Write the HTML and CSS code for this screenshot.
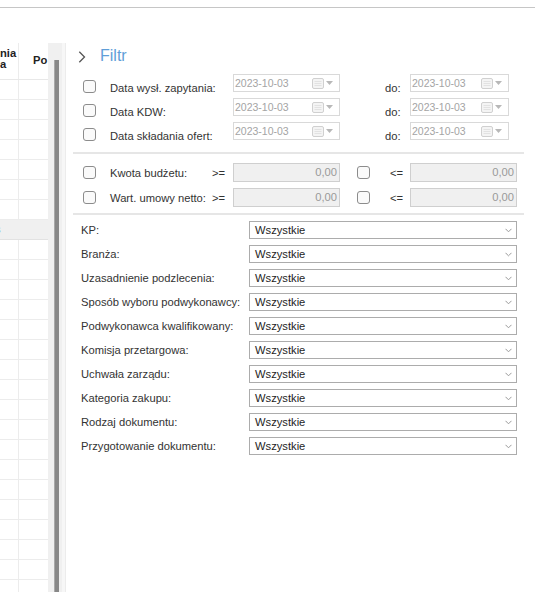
FILE: index.html
```html
<!DOCTYPE html>
<html lang="pl">
<head>
<meta charset="utf-8">
<title>Filtr</title>
<link rel="stylesheet" href="styles.css">
</head>
<body>
<div class="topbar"></div>
<div class="main">
  <div class="leftpane">
    <div class="grid">
      <div class="ghead">
        <div class="hc c1"><span class="h2l">nia<br>a</span></div>
        <div class="hc c2"><span class="h1l">Po</span></div>
      </div>
      <div class="grow"><div class="gc c1"></div><div class="gc c2"></div></div>
      <div class="grow"><div class="gc c1"></div><div class="gc c2"></div></div>
      <div class="grow"><div class="gc c1"></div><div class="gc c2"></div></div>
      <div class="grow"><div class="gc c1"></div><div class="gc c2"></div></div>
      <div class="grow"><div class="gc c1"></div><div class="gc c2"></div></div>
      <div class="grow"><div class="gc c1"></div><div class="gc c2"></div></div>
      <div class="grow"><div class="gc c1"></div><div class="gc c2"></div></div>
      <div class="grow sel"><div class="gc c1"><span class="selchar">s</span></div></div>
      <div class="grow"><div class="gc c1"></div><div class="gc c2"></div></div>
      <div class="grow"><div class="gc c1"></div><div class="gc c2"></div></div>
      <div class="grow"><div class="gc c1"></div><div class="gc c2"></div></div>
      <div class="grow"><div class="gc c1"></div><div class="gc c2"></div></div>
      <div class="grow"><div class="gc c1"></div><div class="gc c2"></div></div>
      <div class="grow"><div class="gc c1"></div><div class="gc c2"></div></div>
      <div class="grow"><div class="gc c1"></div><div class="gc c2"></div></div>
      <div class="grow"><div class="gc c1"></div><div class="gc c2"></div></div>
      <div class="grow"><div class="gc c1"></div><div class="gc c2"></div></div>
      <div class="grow"><div class="gc c1"></div><div class="gc c2"></div></div>
      <div class="grow"><div class="gc c1"></div><div class="gc c2"></div></div>
      <div class="grow"><div class="gc c1"></div><div class="gc c2"></div></div>
      <div class="grow"><div class="gc c1"></div><div class="gc c2"></div></div>
      <div class="grow"><div class="gc c1"></div><div class="gc c2"></div></div>
      <div class="grow"><div class="gc c1"></div><div class="gc c2"></div></div>
      <div class="grow"><div class="gc c1"></div><div class="gc c2"></div></div>
      <div class="grow"><div class="gc c1"></div><div class="gc c2"></div></div>
      <div class="grow"><div class="gc c1"></div><div class="gc c2"></div></div>
    </div>
    <div class="scroll">
      <div class="track"><div class="thumb"></div></div>
      <div class="edge"></div>
    </div>
  </div>

  <section class="filter">
    <div class="fhead">
      <svg class="chev" width="8" height="12" viewBox="0 0 8 12"><path d="M1.3 0.8 L6.5 6 L1.3 11.2" fill="none" stroke="#555" stroke-width="1.3"/></svg>
      <span class="ftitle">Filtr</span>
    </div>

    <div class="dates">
      <div class="drow">
        <span class="cb"></span>
        <span class="dlabel">Data wysł. zapytania:</span>
        <div class="datebox w1"><span class="dval">2023-10-03</span><span class="dicons"><svg width="12" height="11" viewBox="0 0 12 11"><rect x="0.5" y="0.5" width="11" height="10" rx="1.5" fill="#f4f4f4" stroke="#d0d0d0"/><path d="M2.5 3.5h7M2.5 5.5h7M2.5 7.5h7" stroke="#e2e2e2"/></svg><svg width="7" height="4" viewBox="0 0 7 4"><path d="M0 0h7L3.5 4z" fill="#b8b8b8"/></svg></span></div>
        <span class="do">do:</span>
        <div class="datebox w2"><span class="dval">2023-10-03</span><span class="dicons"><svg width="12" height="11" viewBox="0 0 12 11"><rect x="0.5" y="0.5" width="11" height="10" rx="1.5" fill="#f4f4f4" stroke="#d0d0d0"/><path d="M2.5 3.5h7M2.5 5.5h7M2.5 7.5h7" stroke="#e2e2e2"/></svg><svg width="7" height="4" viewBox="0 0 7 4"><path d="M0 0h7L3.5 4z" fill="#b8b8b8"/></svg></span></div>
      </div>
      <div class="drow">
        <span class="cb"></span>
        <span class="dlabel">Data KDW:</span>
        <div class="datebox w1"><span class="dval">2023-10-03</span><span class="dicons"><svg width="12" height="11" viewBox="0 0 12 11"><rect x="0.5" y="0.5" width="11" height="10" rx="1.5" fill="#f4f4f4" stroke="#d0d0d0"/><path d="M2.5 3.5h7M2.5 5.5h7M2.5 7.5h7" stroke="#e2e2e2"/></svg><svg width="7" height="4" viewBox="0 0 7 4"><path d="M0 0h7L3.5 4z" fill="#b8b8b8"/></svg></span></div>
        <span class="do">do:</span>
        <div class="datebox w2"><span class="dval">2023-10-03</span><span class="dicons"><svg width="12" height="11" viewBox="0 0 12 11"><rect x="0.5" y="0.5" width="11" height="10" rx="1.5" fill="#f4f4f4" stroke="#d0d0d0"/><path d="M2.5 3.5h7M2.5 5.5h7M2.5 7.5h7" stroke="#e2e2e2"/></svg><svg width="7" height="4" viewBox="0 0 7 4"><path d="M0 0h7L3.5 4z" fill="#b8b8b8"/></svg></span></div>
      </div>
      <div class="drow">
        <span class="cb"></span>
        <span class="dlabel">Data składania ofert:</span>
        <div class="datebox w1"><span class="dval">2023-10-03</span><span class="dicons"><svg width="12" height="11" viewBox="0 0 12 11"><rect x="0.5" y="0.5" width="11" height="10" rx="1.5" fill="#f4f4f4" stroke="#d0d0d0"/><path d="M2.5 3.5h7M2.5 5.5h7M2.5 7.5h7" stroke="#e2e2e2"/></svg><svg width="7" height="4" viewBox="0 0 7 4"><path d="M0 0h7L3.5 4z" fill="#b8b8b8"/></svg></span></div>
        <span class="do">do:</span>
        <div class="datebox w2"><span class="dval">2023-10-03</span><span class="dicons"><svg width="12" height="11" viewBox="0 0 12 11"><rect x="0.5" y="0.5" width="11" height="10" rx="1.5" fill="#f4f4f4" stroke="#d0d0d0"/><path d="M2.5 3.5h7M2.5 5.5h7M2.5 7.5h7" stroke="#e2e2e2"/></svg><svg width="7" height="4" viewBox="0 0 7 4"><path d="M0 0h7L3.5 4z" fill="#b8b8b8"/></svg></span></div>
      </div>
    </div>

    <div class="sep sep1"></div>

    <div class="budget">
      <div class="brow">
        <span class="cb"></span>
        <span class="blabel">Kwota budżetu:</span>
        <span class="op">&gt;=</span>
        <div class="num">0,00</div>
        <span class="cb cb2"></span>
        <span class="op2">&lt;=</span>
        <div class="num">0,00</div>
      </div>
      <div class="brow">
        <span class="cb"></span>
        <span class="blabel">Wart. umowy netto:</span>
        <span class="op">&gt;=</span>
        <div class="num">0,00</div>
        <span class="cb cb2"></span>
        <span class="op2">&lt;=</span>
        <div class="num">0,00</div>
      </div>
    </div>

    <div class="sep sep2"></div>

    <div class="combos">
      <div class="crow"><span class="clabel">KP:</span><div class="combo"><span>Wszystkie</span><svg width="7" height="5" viewBox="0 0 7 5"><path d="M0.5 0.8 L3.5 3.8 L6.5 0.8" fill="none" stroke="#9a9a9a" stroke-width="1"/></svg></div></div>
      <div class="crow"><span class="clabel">Branża:</span><div class="combo"><span>Wszystkie</span><svg width="7" height="5" viewBox="0 0 7 5"><path d="M0.5 0.8 L3.5 3.8 L6.5 0.8" fill="none" stroke="#9a9a9a" stroke-width="1"/></svg></div></div>
      <div class="crow"><span class="clabel">Uzasadnienie podzlecenia:</span><div class="combo"><span>Wszystkie</span><svg width="7" height="5" viewBox="0 0 7 5"><path d="M0.5 0.8 L3.5 3.8 L6.5 0.8" fill="none" stroke="#9a9a9a" stroke-width="1"/></svg></div></div>
      <div class="crow"><span class="clabel">Sposób wyboru podwykonawcy:</span><div class="combo"><span>Wszystkie</span><svg width="7" height="5" viewBox="0 0 7 5"><path d="M0.5 0.8 L3.5 3.8 L6.5 0.8" fill="none" stroke="#9a9a9a" stroke-width="1"/></svg></div></div>
      <div class="crow"><span class="clabel">Podwykonawca kwalifikowany:</span><div class="combo"><span>Wszystkie</span><svg width="7" height="5" viewBox="0 0 7 5"><path d="M0.5 0.8 L3.5 3.8 L6.5 0.8" fill="none" stroke="#9a9a9a" stroke-width="1"/></svg></div></div>
      <div class="crow"><span class="clabel">Komisja przetargowa:</span><div class="combo"><span>Wszystkie</span><svg width="7" height="5" viewBox="0 0 7 5"><path d="M0.5 0.8 L3.5 3.8 L6.5 0.8" fill="none" stroke="#9a9a9a" stroke-width="1"/></svg></div></div>
      <div class="crow"><span class="clabel">Uchwała zarządu:</span><div class="combo"><span>Wszystkie</span><svg width="7" height="5" viewBox="0 0 7 5"><path d="M0.5 0.8 L3.5 3.8 L6.5 0.8" fill="none" stroke="#9a9a9a" stroke-width="1"/></svg></div></div>
      <div class="crow"><span class="clabel">Kategoria zakupu:</span><div class="combo"><span>Wszystkie</span><svg width="7" height="5" viewBox="0 0 7 5"><path d="M0.5 0.8 L3.5 3.8 L6.5 0.8" fill="none" stroke="#9a9a9a" stroke-width="1"/></svg></div></div>
      <div class="crow"><span class="clabel">Rodzaj dokumentu:</span><div class="combo"><span>Wszystkie</span><svg width="7" height="5" viewBox="0 0 7 5"><path d="M0.5 0.8 L3.5 3.8 L6.5 0.8" fill="none" stroke="#9a9a9a" stroke-width="1"/></svg></div></div>
      <div class="crow"><span class="clabel">Przygotowanie dokumentu:</span><div class="combo"><span>Wszystkie</span><svg width="7" height="5" viewBox="0 0 7 5"><path d="M0.5 0.8 L3.5 3.8 L6.5 0.8" fill="none" stroke="#9a9a9a" stroke-width="1"/></svg></div></div>
    </div>
  </section>
</div>
</body>
</html>
```

FILE: styles.css
```css
html, body {
  margin: 0;
  padding: 0;
  background: #ffffff;
}
body {
  width: 535px;
  height: 592px;
  overflow: hidden;
  font-family: "Liberation Sans", Arial, sans-serif;
  font-size: 11.2px;
  color: #333333;
}
.topbar {
  height: 7px;
  border-bottom: 1px solid #c6c6c6;
}
.main {
  display: flex;
  height: 584px;
  overflow: hidden;
}

/* left grid pane */
.leftpane {
  width: 66px;
  flex: none;
  display: flex;
  padding-top: 35px;
  box-sizing: border-box;
  height: 584px;
  overflow: hidden;
}
.grid {
  width: 48px;
  flex: none;
  overflow: hidden;
}
.ghead {
  display: flex;
  height: 37px;
  box-sizing: border-box;
  border-bottom: 1px solid #e8e8e8;
  font-weight: bold;
  color: #222222;
}
.hc {
  overflow: hidden;
  white-space: nowrap;
  line-height: 11px;
}
.c1 {
  width: 19px;
  box-sizing: border-box;
  border-right: 1px solid #ececec;
}
.c2 {
  width: 29px;
}
.h2l {
  display: block;
  padding-top: 5px;
}
.h1l {
  display: block;
  padding-top: 12px;
  padding-left: 14px;
}
.grow {
  display: flex;
  height: 20px;
  box-sizing: border-box;
  border-bottom: 1px solid #ececec;
}
.gc {
  height: 100%;
}
.grow.sel {
  background: #f0f0f0;
  border-bottom-color: #e2e2e2;
}
.grow.sel .c1 {
  border-right: none;
  overflow: hidden;
}
.selchar {
  display: block;
  margin-left: -5px;
  line-height: 19px;
  color: #6aa6e0;
}
.scroll {
  width: 18px;
  flex: none;
  display: flex;
  background: #f0f0f0;
}
.track {
  width: 14px;
  padding-left: 6px;
  box-sizing: border-box;
}
.thumb {
  margin-top: 17px;
  width: 5px;
  height: 600px;
  box-sizing: border-box;
  background: #888888;
  border-left: 1px solid #a9a9a9;
}
.edge {
  width: 4px;
  background: #f7f7f7;
  border-right: 1px solid #ececec;
  box-sizing: border-box;
}

/* filter pane */
.filter {
  flex: 1;
  display: flex;
  flex-direction: column;
}
.fhead {
  display: flex;
  align-items: flex-start;
  margin-top: 38px;
  height: 20px;
}
.chev {
  margin-left: 12px;
  margin-top: 5px;
}
.ftitle {
  margin-left: 14px;
  font-size: 16px;
  line-height: 20px;
  color: #5f9ed8;
}
.dates {
  display: flex;
  flex-direction: column;
  gap: 6px;
  margin-top: 8px;
}
.drow {
  display: flex;
  align-items: flex-start;
  height: 18px;
}
.cb {
  flex: none;
  width: 13px;
  height: 13px;
  box-sizing: border-box;
  border: 1px solid #8c8c8c;
  border-radius: 3px;
  background: #fafafa;
  margin-left: 17px;
}
.drow .cb {
  margin-top: 6px;
}
.dlabel {
  width: 123px;
  margin-left: 14px;
  padding-top: 7.6px;
  line-height: 13px;
  white-space: nowrap;
}
.datebox {
  display: flex;
  align-items: center;
  height: 18px;
  box-sizing: border-box;
  border: 1px solid #d9d9d9;
  background: #ffffff;
  padding-left: 1px;
  padding-right: 6px;
  color: #a4a4a4;
  font-size: 10.5px;
}
.datebox.w1 {
  width: 107px;
}
.datebox.w2 {
  width: 99px;
}
.dicons {
  margin-left: auto;
  display: flex;
  align-items: center;
  gap: 2px;
}
.do {
  width: 25px;
  margin-left: 45px;
  padding-top: 7.6px;
  line-height: 13px;
}
.sep {
  height: 2px;
  background: #e6e6e6;
  margin-left: 7px;
  margin-right: 11px;
}
.sep1 {
  margin-top: 12px;
}
.budget {
  display: flex;
  flex-direction: column;
  gap: 6px;
  margin-top: 9px;
}
.brow {
  display: flex;
  align-items: center;
  height: 19px;
}
.blabel {
  width: 102px;
  margin-left: 14px;
  white-space: nowrap;
}
.op {
  width: 21px;
}
.op2 {
  width: 20px;
  margin-left: 20px;
}
.num {
  width: 107px;
  height: 19px;
  box-sizing: border-box;
  border: 1px solid #cfcfcf;
  background: #f0f0f0;
  color: #9a9a9a;
  text-align: right;
  padding-right: 2px;
  line-height: 17px;
}
.sep2 {
  margin-top: 6px;
}
.combos {
  display: flex;
  flex-direction: column;
  gap: 6px;
  margin-top: 6px;
}
.crow {
  display: flex;
  align-items: center;
  height: 18px;
}
.clabel {
  width: 168px;
  margin-left: 15px;
  white-space: nowrap;
}
.combo {
  width: 268px;
  height: 18px;
  box-sizing: border-box;
  border: 1px solid #acacac;
  background: #ffffff;
  display: flex;
  align-items: center;
  justify-content: space-between;
  padding-left: 5px;
  padding-right: 4px;
  color: #1e1e1e;
}
```
